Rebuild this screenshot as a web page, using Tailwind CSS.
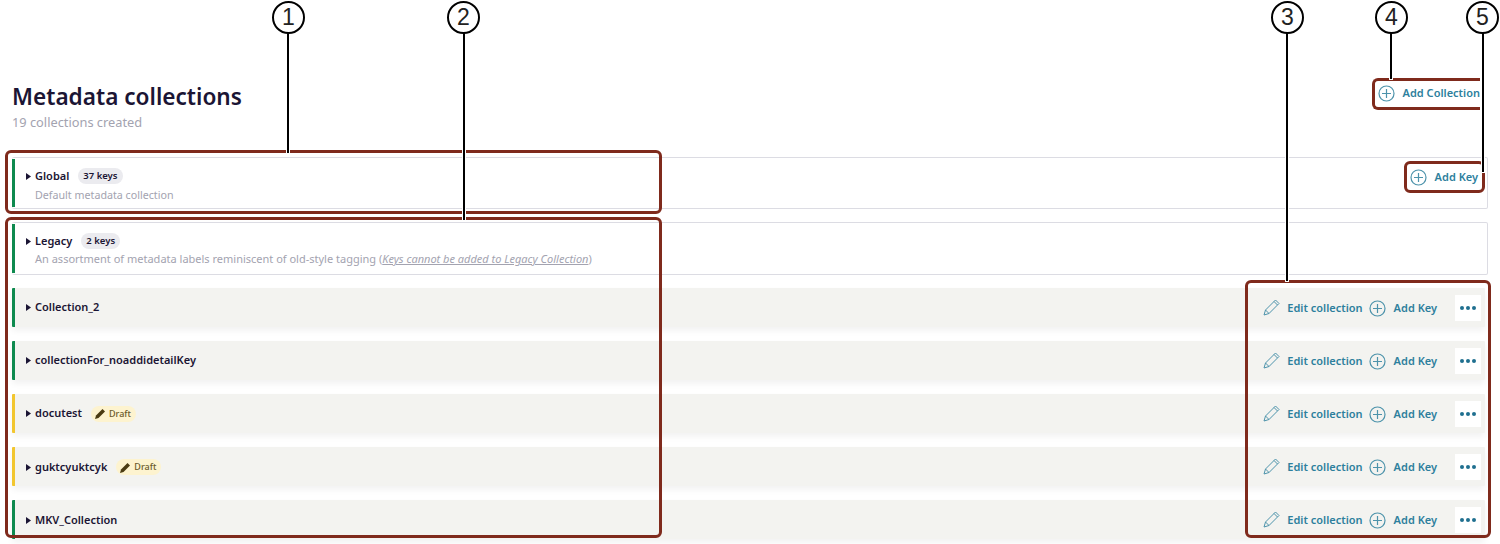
<!DOCTYPE html>
<html lang="en">
<head>
  <meta charset="UTF-8" />
  <title>Metadata collections</title>
  <script src="https://cdn.jsdelivr.net/npm/@tailwindcss/browser@4"></script>
</head>
<body class="bg-white">
  <div class="relative w-[1500px] h-[544px] overflow-hidden font-['Noto_Sans',sans-serif] text-[#1b1534]">

    <!-- page header -->
    <div class="flex justify-between items-start pl-[12px] pr-[20px] pt-[80px] h-[157px]">
      <div>
        <h1 class="text-[22.600px] leading-[33px] font-semibold">Metadata collections</h1>
        <p class="text-[12.800px] leading-[20px] -mt-[1px] text-[#a3a3b0]">19 collections created</p>
      </div>
      <button class="flex items-center h-[26px] text-[11px] font-semibold text-[#2d7f9d]">
        <svg class="w-[17px] h-[17px] mr-[8px]" viewBox="0 0 17 17" fill="none" stroke="#4d93ab" stroke-width="1.200"><circle cx="8.5" cy="8.5" r="7.5"/><path d="M8.5 4v9M4 8.500h9"/></svg>
        Add Collection
      </button>
    </div>

    <!-- collections -->
    <div class="ml-[12px] w-[1476px]">
      <div class="h-[52px] border border-[#dcdce3] rounded-[2px] border-l-0 flex justify-between">
        <div class="border-l-[3px] border-[#0e8a4f] pl-[11px] pt-[9px] my-px">
          <div class="flex items-center h-[16px]">
            <svg class="w-[5px] h-[7px] mr-[4px]" viewBox="0 0 5 7"><path d="M0 0l5 3.500-5 3.500z" fill="#1b1534"/></svg>
            <span class="text-[11px] font-semibold">Global</span>
            <span class="ml-[9px] px-[5px] h-[16px] leading-[16px] rounded-full bg-[#ebebef] text-[9.500px] font-semibold">37 keys</span>
          </div>
          <p class="text-[10.700px] leading-[14px] mt-[4px] ml-[9px] text-[#a3a3b0]">Default metadata collection</p>
        </div>
        <button class="flex items-center self-start mt-[10px] mr-[9px] h-[18px] text-[11px] font-semibold text-[#2d7f9d]">
          <svg class="w-[17px] h-[17px] mr-[8px]" viewBox="0 0 17 17" fill="none" stroke="#4d93ab" stroke-width="1.200"><circle cx="8.5" cy="8.5" r="7.5"/><path d="M8.5 4v9M4 8.500h9"/></svg>
          Add Key
        </button>
      </div>

      <div class="mt-[13px] h-[53px] border border-[#dcdce3] rounded-[2px] border-l-0 flex">
        <div class="border-l-[3px] border-[#0e8a4f] pl-[11px] pt-[9px] my-px">
          <div class="flex items-center h-[16px]">
            <svg class="w-[5px] h-[7px] mr-[4px]" viewBox="0 0 5 7"><path d="M0 0l5 3.500-5 3.500z" fill="#1b1534"/></svg>
            <span class="text-[11px] font-semibold">Legacy</span>
            <span class="ml-[9px] px-[5px] h-[16px] leading-[16px] rounded-full bg-[#ebebef] text-[9.500px] font-semibold">2 keys</span>
          </div>
          <p class="text-[11px] leading-[14px] mt-[3px] ml-[9px] text-[#a3a3b0]">An assortment of metadata labels reminiscent of old-style tagging (<span class="italic underline">Keys cannot be added to Legacy Collection</span>)</p>
        </div>
      </div>

      <!-- Collection_2 -->
      <div class="mt-[13px] h-[39px] w-[1473px] bg-[#f3f3f0] border-l-[3px] border-[#0e8a4f] rounded-[1px] flex items-center justify-between pl-[11px] pr-[4px] shadow-[0_4px_6px_#f3f3f3]">
        <div class="flex items-center">
          <svg class="w-[5px] h-[7px] mr-[4px]" viewBox="0 0 5 7"><path d="M0 0l5 3.500-5 3.500z" fill="#1b1534"/></svg>
          <span class="text-[11px] font-semibold">Collection_2</span>
        </div>
        <div class="flex items-center mt-[1px] text-[11px] font-semibold text-[#2d7f9d]">
          <svg class="w-[18px] h-[18px] mr-[6px] mb-[2px]" viewBox="0 0 18 18" fill="none" stroke="#4d93ab" stroke-width="1"><path d="M1 17l1.500-5L12.500 2l3.500 3.500L6 15.500zM2.500 12L6 15.500M11 3.500L14.500 7"/></svg>
          <span>Edit collection</span>
          <svg class="w-[17px] h-[17px] ml-[6px] mr-[8px]" viewBox="0 0 17 17" fill="none" stroke="#4d93ab" stroke-width="1.200"><circle cx="8.5" cy="8.5" r="7.5"/><path d="M8.5 4v9M4 8.500h9"/></svg>
          <span>Add Key</span>
          <span class="ml-[18px] w-[26px] h-[26px] bg-white flex items-center justify-center gap-[2px]"><i class="w-[4px] h-[4px] rounded-full bg-[#1f6f8f]"></i><i class="w-[4px] h-[4px] rounded-full bg-[#1f6f8f]"></i><i class="w-[4px] h-[4px] rounded-full bg-[#1f6f8f]"></i></span>
        </div>
      </div>

      <!-- collectionFor_noaddidetailKey -->
      <div class="mt-[14px] h-[39px] w-[1473px] bg-[#f3f3f0] border-l-[3px] border-[#0e8a4f] rounded-[1px] flex items-center justify-between pl-[11px] pr-[4px] shadow-[0_4px_6px_#f3f3f3]">
        <div class="flex items-center">
          <svg class="w-[5px] h-[7px] mr-[4px]" viewBox="0 0 5 7"><path d="M0 0l5 3.500-5 3.500z" fill="#1b1534"/></svg>
          <span class="text-[11px] font-semibold">collectionFor_noaddidetailKey</span>
        </div>
        <div class="flex items-center mt-[1px] text-[11px] font-semibold text-[#2d7f9d]">
          <svg class="w-[18px] h-[18px] mr-[6px] mb-[2px]" viewBox="0 0 18 18" fill="none" stroke="#4d93ab" stroke-width="1"><path d="M1 17l1.500-5L12.500 2l3.500 3.500L6 15.500zM2.500 12L6 15.500M11 3.500L14.500 7"/></svg>
          <span>Edit collection</span>
          <svg class="w-[17px] h-[17px] ml-[6px] mr-[8px]" viewBox="0 0 17 17" fill="none" stroke="#4d93ab" stroke-width="1.200"><circle cx="8.5" cy="8.5" r="7.5"/><path d="M8.5 4v9M4 8.500h9"/></svg>
          <span>Add Key</span>
          <span class="ml-[18px] w-[26px] h-[26px] bg-white flex items-center justify-center gap-[2px]"><i class="w-[4px] h-[4px] rounded-full bg-[#1f6f8f]"></i><i class="w-[4px] h-[4px] rounded-full bg-[#1f6f8f]"></i><i class="w-[4px] h-[4px] rounded-full bg-[#1f6f8f]"></i></span>
        </div>
      </div>

      <!-- docutest -->
      <div class="mt-[14px] h-[39px] w-[1473px] bg-[#f3f3f0] border-l-[3px] border-[#f2c62f] rounded-[1px] flex items-center justify-between pl-[11px] pr-[4px] shadow-[0_4px_6px_#f3f3f3]">
        <div class="flex items-center">
          <svg class="w-[5px] h-[7px] mr-[4px]" viewBox="0 0 5 7"><path d="M0 0l5 3.500-5 3.500z" fill="#1b1534"/></svg>
          <span class="text-[11px] font-semibold">docutest</span>
          <span class="ml-[9px] pl-[4px] pr-[5px] h-[16px] rounded-full bg-[#fdf3cf] flex items-center text-[9px] font-medium text-[#6b5a2a]">
            <svg class="w-[11px] h-[11px] mr-[3px]" viewBox="0 0 11 11"><path d="M0 11l1-3.500L7.500 1 10 3.500 3.500 10z" fill="#4a3b12"/></svg>
            Draft
          </span>
        </div>
        <div class="flex items-center mt-[1px] text-[11px] font-semibold text-[#2d7f9d]">
          <svg class="w-[18px] h-[18px] mr-[6px] mb-[2px]" viewBox="0 0 18 18" fill="none" stroke="#4d93ab" stroke-width="1"><path d="M1 17l1.500-5L12.500 2l3.500 3.500L6 15.500zM2.500 12L6 15.500M11 3.500L14.500 7"/></svg>
          <span>Edit collection</span>
          <svg class="w-[17px] h-[17px] ml-[6px] mr-[8px]" viewBox="0 0 17 17" fill="none" stroke="#4d93ab" stroke-width="1.200"><circle cx="8.5" cy="8.5" r="7.5"/><path d="M8.5 4v9M4 8.500h9"/></svg>
          <span>Add Key</span>
          <span class="ml-[18px] w-[26px] h-[26px] bg-white flex items-center justify-center gap-[2px]"><i class="w-[4px] h-[4px] rounded-full bg-[#1f6f8f]"></i><i class="w-[4px] h-[4px] rounded-full bg-[#1f6f8f]"></i><i class="w-[4px] h-[4px] rounded-full bg-[#1f6f8f]"></i></span>
        </div>
      </div>

      <!-- guktcyuktcyk -->
      <div class="mt-[14px] h-[39px] w-[1473px] bg-[#f3f3f0] border-l-[3px] border-[#f2c62f] rounded-[1px] flex items-center justify-between pl-[11px] pr-[4px] shadow-[0_4px_6px_#f3f3f3]">
        <div class="flex items-center mt-[1px]">
          <svg class="w-[5px] h-[7px] mr-[4px]" viewBox="0 0 5 7"><path d="M0 0l5 3.500-5 3.500z" fill="#1b1534"/></svg>
          <span class="text-[11px] font-semibold">guktcyuktcyk</span>
          <span class="ml-[9px] pl-[4px] pr-[5px] h-[16px] rounded-full bg-[#fdf3cf] flex items-center text-[9px] font-medium text-[#6b5a2a]">
            <svg class="w-[11px] h-[11px] mr-[3px]" viewBox="0 0 11 11"><path d="M0 11l1-3.500L7.500 1 10 3.500 3.500 10z" fill="#4a3b12"/></svg>
            Draft
          </span>
        </div>
        <div class="flex items-center mt-[1px] text-[11px] font-semibold text-[#2d7f9d]">
          <svg class="w-[18px] h-[18px] mr-[6px] mb-[2px]" viewBox="0 0 18 18" fill="none" stroke="#4d93ab" stroke-width="1"><path d="M1 17l1.500-5L12.500 2l3.500 3.500L6 15.500zM2.500 12L6 15.500M11 3.500L14.500 7"/></svg>
          <span>Edit collection</span>
          <svg class="w-[17px] h-[17px] ml-[6px] mr-[8px]" viewBox="0 0 17 17" fill="none" stroke="#4d93ab" stroke-width="1.200"><circle cx="8.5" cy="8.5" r="7.5"/><path d="M8.5 4v9M4 8.500h9"/></svg>
          <span>Add Key</span>
          <span class="ml-[18px] w-[26px] h-[26px] bg-white flex items-center justify-center gap-[2px]"><i class="w-[4px] h-[4px] rounded-full bg-[#1f6f8f]"></i><i class="w-[4px] h-[4px] rounded-full bg-[#1f6f8f]"></i><i class="w-[4px] h-[4px] rounded-full bg-[#1f6f8f]"></i></span>
        </div>
      </div>

      <!-- MKV_Collection -->
      <div class="mt-[14px] h-[39px] w-[1473px] bg-[#f3f3f0] border-l-[3px] border-[#0e8a4f] rounded-[1px] flex items-center justify-between pl-[11px] pr-[4px] shadow-[0_4px_6px_#f3f3f3]">
        <div class="flex items-center mt-[1px]">
          <svg class="w-[5px] h-[7px] mr-[4px]" viewBox="0 0 5 7"><path d="M0 0l5 3.500-5 3.500z" fill="#1b1534"/></svg>
          <span class="text-[11px] font-semibold">MKV_Collection</span>
        </div>
        <div class="flex items-center mt-[1px] text-[11px] font-semibold text-[#2d7f9d]">
          <svg class="w-[18px] h-[18px] mr-[6px] mb-[2px]" viewBox="0 0 18 18" fill="none" stroke="#4d93ab" stroke-width="1"><path d="M1 17l1.500-5L12.500 2l3.500 3.500L6 15.500zM2.500 12L6 15.500M11 3.500L14.500 7"/></svg>
          <span>Edit collection</span>
          <svg class="w-[17px] h-[17px] ml-[6px] mr-[8px]" viewBox="0 0 17 17" fill="none" stroke="#4d93ab" stroke-width="1.200"><circle cx="8.5" cy="8.5" r="7.5"/><path d="M8.5 4v9M4 8.500h9"/></svg>
          <span>Add Key</span>
          <span class="ml-[18px] w-[26px] h-[26px] bg-white flex items-center justify-center gap-[2px]"><i class="w-[4px] h-[4px] rounded-full bg-[#1f6f8f]"></i><i class="w-[4px] h-[4px] rounded-full bg-[#1f6f8f]"></i><i class="w-[4px] h-[4px] rounded-full bg-[#1f6f8f]"></i></span>
        </div>
      </div>
    </div>

    <!-- callout boxes, drawn over the screenshot -->
    <div class="absolute left-[5px] top-[150px] w-[657px] h-[64px] border-[3px] border-[#7f2a1c] rounded-[6px]"></div>
    <div class="absolute left-[5px] top-[217px] w-[657px] h-[321px] border-[3px] border-[#7f2a1c] rounded-[6px]"></div>
    <div class="absolute left-[1245px] top-[280px] w-[246px] h-[258px] border-[3px] border-[#7f2a1c] rounded-[6px]"></div>
    <div class="absolute left-[1372px] top-[78px] w-[108px] h-[32px] border-[3px] border-r-0 border-[#7f2a1c] rounded-l-[6px]"></div>
    <div class="absolute left-[1404px] top-[161px] w-[81px] h-[32px] border-[3px] border-[#7f2a1c] rounded-[6px]"></div>

    <!-- callout leader lines -->
    <div class="absolute left-[287px] top-[30px] w-[2px] h-[123px] bg-black shadow-[0_0_0_1px_white]"></div>
    <div class="absolute left-[463px] top-[30px] w-[2px] h-[190px] bg-black shadow-[0_0_0_1px_white]"></div>
    <div class="absolute left-[1286px] top-[30px] w-[2px] h-[251px] bg-black shadow-[0_0_0_1px_white]"></div>
    <div class="absolute left-[1390px] top-[30px] w-[2px] h-[49px] bg-black shadow-[0_0_0_1px_white]"></div>
    <div class="absolute left-[1482px] top-[30px] w-[2px] h-[142px] bg-black shadow-[0_0_0_1px_white]"></div>

    <!-- callout numbers -->
    <div class="absolute left-[272px] top-[1px] w-[33px] h-[33px] rounded-full border-2 border-black bg-white flex items-center justify-center text-[23px] text-[#222] font-['Liberation_Sans',sans-serif]">1</div>
    <div class="absolute left-[447px] top-[1px] w-[33px] h-[33px] rounded-full border-2 border-black bg-white flex items-center justify-center text-[23px] text-[#222] font-['Liberation_Sans',sans-serif]">2</div>
    <div class="absolute left-[1271px] top-[1px] w-[33px] h-[33px] rounded-full border-2 border-black bg-white flex items-center justify-center text-[23px] text-[#222] font-['Liberation_Sans',sans-serif]">3</div>
    <div class="absolute left-[1375px] top-[1px] w-[33px] h-[33px] rounded-full border-2 border-black bg-white flex items-center justify-center text-[23px] text-[#222] font-['Liberation_Sans',sans-serif]">4</div>
    <div class="absolute left-[1466px] top-[1px] w-[33px] h-[33px] rounded-full border-2 border-black bg-white flex items-center justify-center text-[23px] text-[#222] font-['Liberation_Sans',sans-serif]">5</div>
  </div>
</body>
</html>
